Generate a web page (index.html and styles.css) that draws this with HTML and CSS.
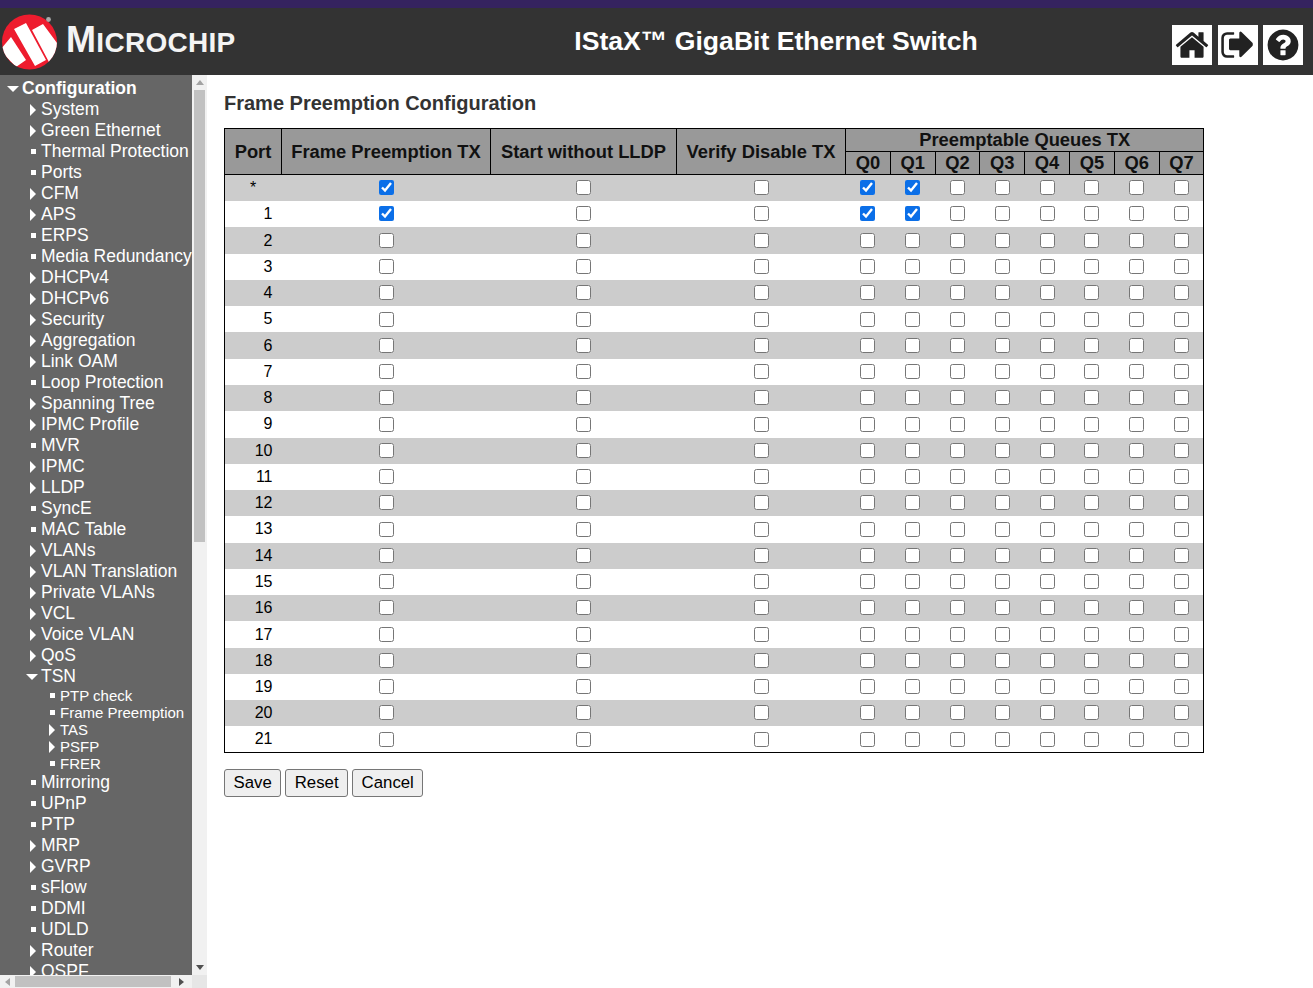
FILE: index.html
```html
<!DOCTYPE html>
<html lang="en">

<head>
    <meta charset="UTF-8">
    <title>Frame Preemption Configuration</title>
    <link rel="stylesheet" href="styles.css">
</head>

<body>
    <div class="topline"></div>
    <header class="header">
        <div class="logo">
            <svg class="logo-mark" viewBox="0 0 64 64">
                <defs>
                    <clipPath id="disc"><circle cx="29.5" cy="32" r="27.5"/></clipPath>
                </defs>
                <circle cx="29.5" cy="32" r="27.5" fill="#ee1c2e"/>
                <circle cx="48.5" cy="9.5" r="2.4" fill="#aaa"/>
                <path clip-path="url(#disc)" d="M0 40L11 27L26 50L16 57Z M14 19L26 13L46 50L35 56Z M32 20L43 14L60 37L50 54Z" fill="#fff"/>
            </svg>
            <span class="logo-text"><span class="logo-big">M</span>ICROCHIP</span>
        </div>
        <div class="title">IStaX™ GigaBit Ethernet Switch</div>
        <div class="header-buttons">
            <a class="icon-button"><svg viewBox="0 0 1792 1792"><path d="M1472 992v480q0 26-19 45t-45 19h-384v-384H768v384H384q-26 0-45-19t-19-45V992q0-1 .5-3t.5-3l575-474 575 474q1 2 1 6zm223-69l-62 74q-8 9-21 11h-3q-13 0-21-7L896 424l-692 577q-12 8-24 7-13-2-21-11l-62-74q-8-10-7-23.5t11-21.5l719-599q32-26 76-26t76 26l244 204V288q0-14 9-23t23-9h192q14 0 23 9t9 23v408l219 182q10 8 11 21.5t-7 23.5z"/></svg></a>
            <a class="icon-button"><svg viewBox="0 0 1792 1792"><path d="M704 1440q0 4 1 20t.5 26.5-3 23.5-10 19.5-20.5 6.5H352q-119 0-203.5-84.5T64 1248V544q0-119 84.5-203.5T352 256h320q13 0 22.5 9.5T704 288q0 4 1 20t.5 26.5-3 23.5-10 19.5-20.5 6.5H352q-66 0-113 47t-47 113v704q0 66 47 113t113 47h312l11.5 1 11.5 3 8 5.5 7 9 2 13.5zm928-544q0 26-19 45l-544 544q-19 19-45 19t-45-19-19-45v-288H512q-26 0-45-19t-19-45V640q0-26 19-45t45-19h448V288q0-26 19-45t45-19 45 19l544 544q19 19 19 45z"/></svg></a>
            <a class="icon-button"><svg viewBox="0 0 1792 1792"><path d="M1024 1376v-192q0-14-9-23t-23-9H800q-14 0-23 9t-9 23v192q0 14 9 23t23 9h192q14 0 23-9t9-23zm256-672q0-88-55.5-163T1086 425t-170-41q-243 0-371 213-15 24 8 42l132 100q7 6 19 6 16 0 25-12 53-68 86-92 34-24 86-24 48 0 85.5 26t37.5 59q0 38-20 61t-68 45q-63 28-115.5 86.5T768 1020v36q0 14 9 23t23 9h192q14 0 23-9t9-23q0-19 21.5-49.5T1100 957q32-18 49-28.5t46-35 44.5-48 28-60.5 12.5-81zm384 192q0 209-103 385.5T1281.5 1561 896 1664t-385.5-103T231 1281.5 128 896t103-385.5T510.5 231 896 128t385.5 103T1561 510.5 1664 896z"/></svg></a>
        </div>
    </header>

    <div class="layout">
        <nav class="sidebar">
            <div class="menu" id="menu"></div>
            <div class="vscroll">
                <span class="arrow arrow-up"></span>
                <div class="vtrack"><div class="vthumb"></div></div>
                <span class="arrow arrow-down"></span>
            </div>
            <div class="hscroll">
                <span class="arrow arrow-left"></span>
                <div class="hthumb"></div>
                <span class="arrow arrow-right"></span>
            </div>
            <div class="corner"></div>
        </nav>

        <main class="content">
            <h1>Frame Preemption Configuration</h1>
            <table class="config">
                <colgroup>
                    <col class="col-port">
                    <col class="col-frame">
                    <col class="col-lldp">
                    <col class="col-verify">
                    <col class="col-q" span="8">
                </colgroup>
                <thead>
                    <tr class="head-top">
                        <th rowspan="2">Port</th>
                        <th rowspan="2">Frame Preemption TX</th>
                        <th rowspan="2">Start without LLDP</th>
                        <th rowspan="2">Verify Disable TX</th>
                        <th colspan="8">Preemptable Queues TX</th>
                    </tr>
                    <tr class="head-bottom">
                        <th>Q0</th><th>Q1</th><th>Q2</th><th>Q3</th><th>Q4</th><th>Q5</th><th>Q6</th><th>Q7</th>
                    </tr>
                </thead>
                <tbody id="rows"></tbody>
            </table>
            <div class="buttons">
                <button>Save</button>
                <button>Reset</button>
                <button>Cancel</button>
            </div>
        </main>
    </div>

    <script src="menu.js"></script>
</body>

</html>
```

FILE: styles.css
```css
* {
    box-sizing: border-box;
}

html,
body {
    height: 100%;
}

body {
    margin: 0;
    font-family: "Liberation Sans", Arial, sans-serif;
    background: #fff;
    color: #000;
    display: flex;
    flex-direction: column;
    overflow: hidden;
}

.topline {
    height: 8px;
    background: #35235f;
}

.header {
    height: 67px;
    background: #333;
    display: flex;
    align-items: center;
    position: relative;
}

.logo {
    display: flex;
    align-items: center;
    width: 240px;
}

.logo-mark {
    flex: none;
    width: 64px;
    height: 64px;
    margin-top: 1px;
}

.logo-text {
    color: #f4f4f4;
    font-size: 28px;
    font-weight: bold;
    letter-spacing: 0.3px;
    line-height: 36px;
    margin-left: 2px;
    white-space: nowrap;
}

.logo-big {
    font-size: 36px;
}

.title {
    flex: 1;
    color: #fff;
    font-size: 26.6px;
    font-weight: bold;
    text-align: center;
    margin-left: 140px;
    white-space: nowrap;
}

.header-buttons {
    display: flex;
    gap: 5.5px;
    width: 141px;
    margin-top: 7px;
}

.icon-button {
    width: 40px;
    height: 40px;
    background: #fff;
    display: flex;
    align-items: center;
    justify-content: center;
}

.icon-button svg {
    width: 36px;
    height: 36px;
    fill: #222;
}

.layout {
    flex: 1;
    display: flex;
    min-height: 0;
}

.sidebar {
    width: 207px;
    flex: none;
    display: grid;
    grid-template-columns: 192px 15px;
    grid-template-rows: 900px 13px;
    background: #f1f1f1;
}

.menu {
    background: #666;
    color: #fff;
    overflow: hidden;
    font-size: 17.5px;
    padding-top: 3px;
    white-space: nowrap;
}

.item {
    height: 21px;
    line-height: 21px;
    display: flex;
    align-items: center;
}

.item.level0 {
    font-weight: bold;
    padding-left: 7px;
}

.item.level1 {
    padding-left: 30px;
}

.item.open {
    padding-left: 26px;
}

.item.level2 {
    height: 17px;
    line-height: 17px;
    font-size: 15px;
    padding-left: 49px;
}

.mark {
    flex: none;
    width: 11px;
    display: flex;
    align-items: center;
}

.level0 .mark,
.open .mark {
    width: 15px;
}

.mark::before {
    content: "";
    display: block;
}

.leaf .mark::before {
    width: 5px;
    height: 5px;
    margin-left: 1px;
    background: #fff;
}

.closed .mark::before {
    border-left: 6px solid #fff;
    border-top: 6.5px solid transparent;
    border-bottom: 6.5px solid transparent;
}

.open .mark::before,
.level0 .mark::before {
    border-top: 6.5px solid #fff;
    border-left: 6.5px solid transparent;
    border-right: 6.5px solid transparent;
}

.vscroll {
    display: flex;
    flex-direction: column;
    align-items: center;
    padding-bottom: 2px;
}

.vtrack {
    flex: 1;
    width: 100%;
    padding: 0 2px;
}

.vthumb {
    height: 452px;
    margin-top: 1px;
    background: #c1c1c1;
}

.arrow {
    flex: none;
    width: 0;
    height: 0;
    display: block;
}

.arrow-up {
    margin: 5px 0 4px;
    border-bottom: 5px solid #a3a3a3;
    border-left: 4px solid transparent;
    border-right: 4px solid transparent;
}

.arrow-down {
    margin: 4px 0 3px;
    border-top: 5px solid #505050;
    border-left: 4px solid transparent;
    border-right: 4px solid transparent;
}

.hscroll {
    display: flex;
    align-items: center;
    padding: 0 5px;
}

.hthumb {
    width: 156px;
    height: 11px;
    margin-left: 5px;
    background: #c1c1c1;
}

.arrow-left {
    border-right: 5px solid #a3a3a3;
    border-top: 4px solid transparent;
    border-bottom: 4px solid transparent;
}

.arrow-right {
    margin-left: 8px;
    border-left: 5px solid #505050;
    border-top: 4px solid transparent;
    border-bottom: 4px solid transparent;
}

.corner {
    background: #e6e6e6;
}

.content {
    flex: 1;
    padding: 17px 0 0 17px;
    color: #333;
}

h1 {
    margin: 0 0 13px;
    font-size: 20px;
    line-height: 23px;
    font-weight: bold;
    color: #333;
}

.config {
    width: 979.4px;
    table-layout: fixed;
    border-collapse: collapse;
    border: 1px solid #000;
    color: #000;
}

.col-port {
    width: 57px;
}

.col-frame {
    width: 209px;
}

.col-lldp {
    width: 186px;
}

.col-verify {
    width: 169px;
}

.col-q {
    width: 44.8px;
}

th {
    background: #999;
    border: 1px solid #000;
    font-size: 18.35px;
    font-weight: bold;
    padding: 0;
    white-space: nowrap;
    color: #111;
}

.head-top th {
    height: 23px;
}

.head-bottom th {
    height: 23.4px;
}

td {
    height: 26.27px;
    padding: 0;
    font-size: 16px;
    text-align: center;
    vertical-align: middle;
}

tbody tr:nth-child(odd) td {
    background: #ccc;
}

td.port {
    text-align: right;
    padding-right: 9px;
}

td.all {
    text-align: left;
    padding-left: 25px;
}

input {
    display: block;
    width: 15px;
    height: 15px;
    margin: -0.7px auto 0;
    accent-color: #0b6fe8;
}

.buttons {
    display: flex;
    gap: 4px;
    margin-top: 16px;
}

button {
    height: 28px;
    padding: 0 8.5px;
    font-family: "Liberation Sans", Arial, sans-serif;
    font-size: 16.8px;
    color: #000;
    background: #efefef;
    border: 1px solid #767676;
    border-radius: 3px;
}
```

FILE: menu.js
```js
var menu = [
    ['System', 'closed'], ['Green Ethernet', 'closed'], ['Thermal Protection', 'leaf'], ['Ports', 'leaf'],
    ['CFM', 'closed'], ['APS', 'closed'], ['ERPS', 'leaf'], ['Media Redundancy', 'leaf'],
    ['DHCPv4', 'closed'], ['DHCPv6', 'closed'], ['Security', 'closed'], ['Aggregation', 'closed'],
    ['Link OAM', 'closed'], ['Loop Protection', 'leaf'], ['Spanning Tree', 'closed'], ['IPMC Profile', 'closed'],
    ['MVR', 'leaf'], ['IPMC', 'closed'], ['LLDP', 'closed'], ['SyncE', 'leaf'], ['MAC Table', 'leaf'],
    ['VLANs', 'closed'], ['VLAN Translation', 'closed'], ['Private VLANs', 'closed'], ['VCL', 'closed'],
    ['Voice VLAN', 'closed'], ['QoS', 'closed'], ['TSN', 'open'],
    ['PTP check', 'leaf', 2], ['Frame Preemption', 'leaf', 2], ['TAS', 'closed', 2], ['PSFP', 'closed', 2], ['FRER', 'leaf', 2],
    ['Mirroring', 'leaf'], ['UPnP', 'leaf'], ['PTP', 'leaf'], ['MRP', 'closed'], ['GVRP', 'closed'], ['sFlow', 'leaf'],
    ['DDMI', 'leaf'], ['UDLD', 'leaf'], ['Router', 'closed'], ['OSPF', 'closed']
];

var html = '<div class="item level0"><span class="mark"></span>Configuration</div>';
menu.forEach(function (m) {
    html += '<div class="item level' + (m[2] || 1) + ' ' + m[1] + '"><span class="mark"></span>' + m[0] + '</div>';
});
document.getElementById('menu').innerHTML = html;

function box(checked) {
    return '<td><input type="checkbox"' + (checked ? ' checked' : '') + '></td>';
}

var rows = '';
for (var i = 0; i <= 21; i++) {
    var on = i < 2;
    rows += '<tr><td class="port' + (i === 0 ? ' all' : '') + '">' + (i === 0 ? '*' : i) + '</td>';
    rows += box(on) + box(false) + box(false);
    for (var q = 0; q < 8; q++) {
        rows += box(on && q < 2);
    }
    rows += '</tr>';
}
document.getElementById('rows').innerHTML = rows;
```
